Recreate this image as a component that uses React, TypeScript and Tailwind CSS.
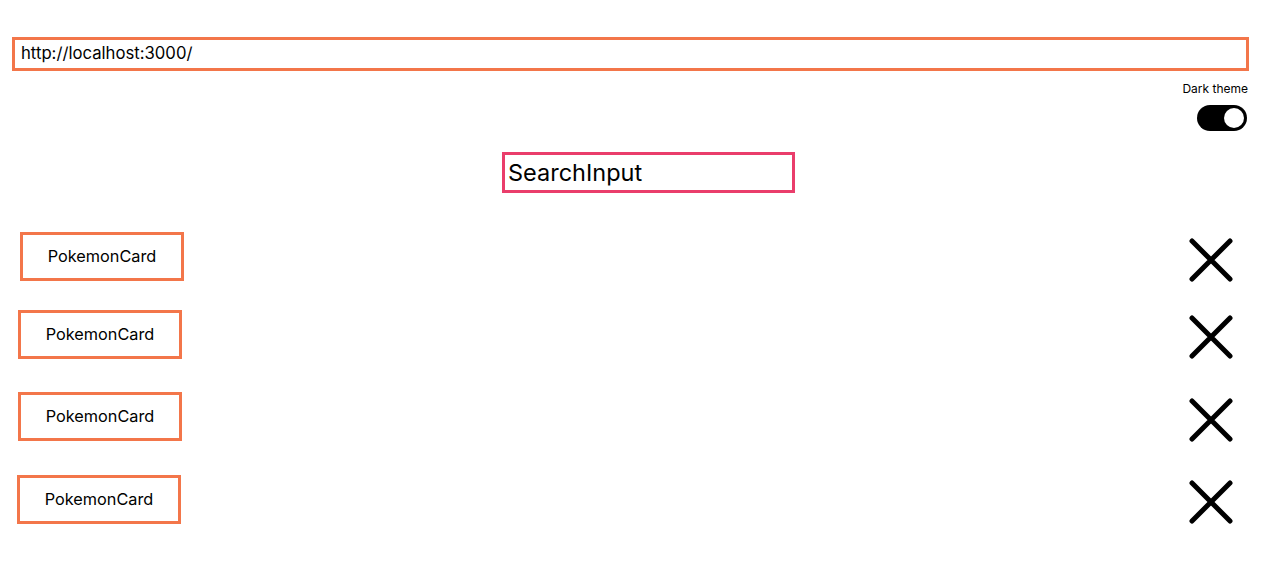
import React from "react";

function XIcon() {
  return (
    <svg width="44" height="44" viewBox="0 0 44 44" fill="none">
      <path d="M3 3L41 41M41 3L3 41" stroke="#000" strokeWidth="5" strokeLinecap="round" />
    </svg>
  );
}

function Row({ cardMl, mt, xMt }: { cardMl: string; mt: string; xMt: string }) {
  return (
    <div className={`flex items-start justify-between pr-[47px] ${mt}`}>
      <div
        className={`${cardMl} w-[164px] h-[49px] border-[3px] border-[#f3764a] flex items-center justify-center text-[16.3px] text-black`}
      >
        PokemonCard
      </div>
      <div className={xMt}>
        <XIcon />
      </div>
    </div>
  );
}

export default function App() {
  return (
    <div
      className="w-[1280px] h-[577px] bg-white overflow-hidden text-black"
      style={{ fontFamily: "Inter, 'Noto Sans', sans-serif" }}
    >
      <div className="pt-[37px] pl-[12px]">
        <div className="w-[1237px] h-[34px] border-[3px] border-[#f3764a] flex items-center pl-[6px] text-[16.7px]">
          http://localhost:3000/
        </div>
      </div>
      <div className="flex flex-col items-end pr-[32px] mt-[11px]">
        <div className="text-[12px] leading-[14px]">Dark theme</div>
        <div className="mt-[9px] mr-[1px] w-[50px] h-[26px] rounded-full bg-black flex items-center justify-end pr-[3px]">
          <div className="w-[20px] h-[20px] rounded-full bg-white" />
        </div>
      </div>
      <div className="pl-[502px] mt-[21px]">
        <div className="w-[293px] h-[41px] border-[3px] border-[#ea3d6b] flex items-center pl-[3px] text-[23.5px]">
          SearchInput
        </div>
      </div>
      <Row cardMl="ml-[20px]" mt="mt-[39px]" xMt="mt-[6px]" />
      <Row cardMl="ml-[18px]" mt="mt-[28px]" xMt="mt-[5px]" />
      <Row cardMl="ml-[18px]" mt="mt-[33px]" xMt="mt-[6px]" />
      <Row cardMl="ml-[17px]" mt="mt-[33px]" xMt="mt-[5px]" />
    </div>
  );
}
